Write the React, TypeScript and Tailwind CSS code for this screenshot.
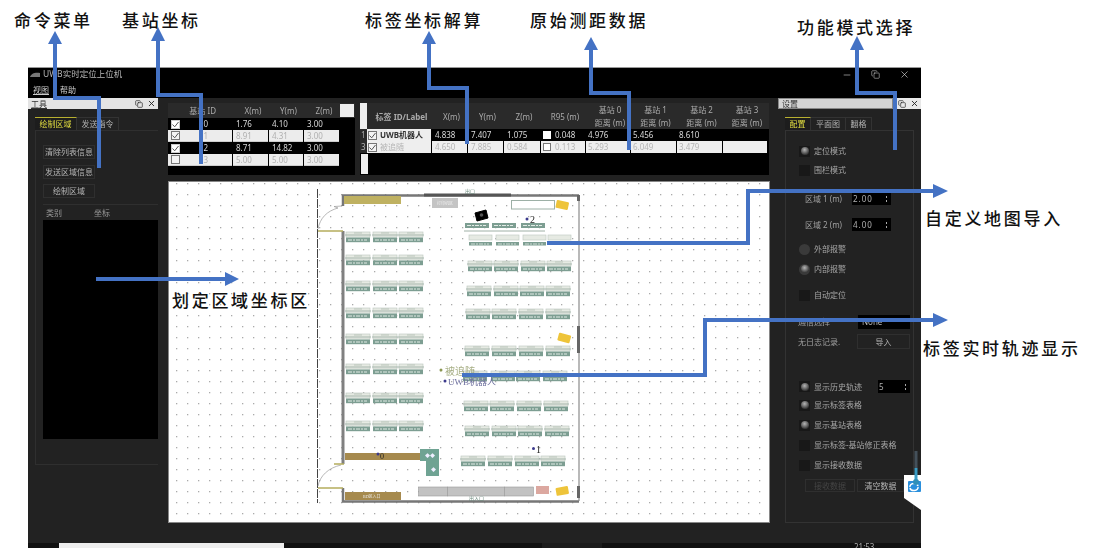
import { Copy, Minus, X } from "lucide-react";
import type { ReactNode } from "react";

const sans = "font-['Noto_Sans','Noto_Sans_CJK_SC',sans-serif]";

function Tab({ label, active, w }: { label: string; active?: boolean; w: string }) {
  return (
    <div
      className={`${w} h-[13px] flex items-center justify-center border-t border-r ${
        active ? "border-t-[#b8b030] border-r-[#333] text-[#e0dc40] bg-[#1d1d1d]" : "border-t-[#333] border-r-[#333] text-[#b0b0b0]"
      }`}
    >
      {label}
    </div>
  );
}

function PanelIcons() {
  return (
    <div className="flex items-center gap-[4px] text-[#222]">
      <Copy size={8} strokeWidth={2} />
      <X size={9} strokeWidth={2.4} />
    </div>
  );
}

function Btn({ children, className = "" }: { children: ReactNode; className?: string }) {
  return (
    <div className={`flex items-center justify-center border border-[#2f2f2f] text-[#b5b5b5] ${className}`}>{children}</div>
  );
}

function Ind({ on, round }: { on?: boolean; round?: boolean }) {
  return (
    <span
      className={`w-[11px] h-[11px] shrink-0 flex items-center justify-center ${
        round ? "rounded-full bg-[#3a3a3a]" : "bg-[#181818]"
      }`}
    >
      {on && (
        <span className="w-[8px] h-[8px] rounded-full bg-[radial-gradient(circle_at_45%_35%,#b5b5b5,#3a3a3a_70%)]" />
      )}
    </span>
  );
}

function Opt({ label, on, round, className = "" }: { label: string; on?: boolean; round?: boolean; className?: string }) {
  return (
    <div className={`h-[12px] flex items-center gap-[4px] text-[#a8a8a8] ${className}`}>
      <Ind on={on} round={round} />
      <span className="whitespace-nowrap">{label}</span>
    </div>
  );
}

function Spin({ value, w }: { value: string; w: string }) {
  return (
    <div className={`${w} h-[13px] bg-black text-[#b0b0b0] flex items-center justify-between px-[1px] tracking-[1px]`}>
      <span>{value}</span>
      <span className="flex flex-col gap-[2px] items-center mr-[3px]">
        <span className="w-[1px] h-[2px] bg-[#aaa]" />
        <span className="w-[1px] h-[2px] bg-[#aaa]" />
      </span>
    </div>
  );
}

function Cbx({ checked, dark }: { checked?: boolean; dark?: boolean }) {
  return (
    <span
      className={`w-[9px] h-[9px] shrink-0 flex items-center justify-center border ${
        dark ? "bg-white border-[#ccc]" : "bg-[#f4f4f4] border-[#777]"
      }`}
    >
      {checked && (
        <svg width="7" height="7" viewBox="0 0 7 7" className="block">
          <path d="M0.500 3.500L2.700 5.800L6.500 1" fill="none" stroke="#555" strokeWidth="1" />
        </svg>
      )}
    </span>
  );
}

const baseRows = [
  { id: "0", x: "1.76", y: "4.10", z: "3.00", on: true, dark: true },
  { id: "1", x: "8.91", y: "4.31", z: "3.00", on: true, dark: false },
  { id: "2", x: "8.71", y: "14.82", z: "3.00", on: true, dark: true },
  { id: "3", x: "5.00", y: "5.00", z: "3.00", on: false, dark: false },
];

const tagHeads = ["X(m)", "Y(m)", "Z(m)", "R95 (m)"];

const leftRows = [231, 254, 280, 307, 333, 363, 392, 420];
const leftXs = [345, 372, 398];
const rightRows: [number, number[]][] = [
  [260, [467, 493, 520, 546]],
  [285, [466, 493, 519, 545]],
  [308, [465, 491, 518, 545]],
  [345, [464, 491, 518, 545]],
  [370, [462, 490, 515, 542]],
  [400, [463, 489, 516, 543]],
  [425, [464, 491, 517, 544]],
  [455, [460, 487, 514, 540]],
];

function Desk({ x, y }: { x: number; y: number }) {
  return (
    <g>
      <rect x={x} y={y} width={24} height={5} fill="#e6eae3" stroke="#c3cdc5" strokeWidth={0.7} />
      <line x1={x - 1} x2={x + 25} y1={y + 3} y2={y + 3} stroke="#9fb0a6" strokeWidth={0.9} />
      <line x1={x + 8} x2={x + 16} y1={y + 1} y2={y + 1} stroke="#a9b8ae" strokeWidth={0.7} />
      <rect x={x} y={y + 5.5} width={24} height={4.7} fill="#7d9e92" />
      <line x1={x + 2} x2={x + 21} y1={y + 8} y2={y + 8} stroke="#e2ebe5" strokeWidth={1} strokeDasharray="4 1 2 1" />
    </g>
  );
}

function Sticker({ x, y, r }: { x: number; y: number; r: number }) {
  return (
    <rect x={x} y={y} width={12.500} height={8} rx="1" fill="#eec43a" transform={`rotate(${r} ${x + 6} ${y + 4})`} />
  );
}

function FloorPlan() {
  const serif = "'Liberation Serif','Noto Sans CJK SC',serif";
  return (
    <svg viewBox="168 181 600 340" className="w-full h-full block">
      <defs>
        <pattern id="dots" x="175" y="193" width="11" height="11" patternUnits="userSpaceOnUse">
          <rect width="1.300" height="1.300" fill="#aaaaaa" />
        </pattern>
      </defs>
      <rect x="168" y="181" width="600" height="340" fill="url(#dots)" />

      {/* outer dashed line and walls */}
      <line x1="316.5" x2="316.5" y1="188" y2="502" stroke="#444" strokeWidth="1" strokeDasharray="9 1" />
      <path d="M342 205V194.500H578" fill="none" stroke="#777" strokeWidth="2.500" />
      <path d="M342 487V500.500H578" fill="none" stroke="#777" strokeWidth="2.500" />
      <line x1="342" x2="342" y1="230" y2="463" stroke="#808080" strokeWidth="3" />
      <line x1="578" x2="578" y1="194" y2="500" stroke="#8a8a8a" strokeWidth="1.200" />
      <line x1="423" x2="510" y1="194" y2="194" stroke="#555" strokeWidth="3" />
      <line x1="577.5" x2="577.5" y1="194" y2="200" stroke="#666" strokeWidth="3" />
      <line x1="577.5" x2="577.5" y1="325" y2="352" stroke="#666" strokeWidth="3" />
      <line x1="577.5" x2="577.5" y1="485" y2="497" stroke="#666" strokeWidth="3" />
      <text x="464" y="192" fontSize="5" fill="#6b8a7d" fontFamily={serif}>出口</text>

      {/* doors */}
      <line x1="317" x2="342" y1="230" y2="230" stroke="#b5ad5c" strokeWidth="1.500" />
      <path d="M317 228C319 217 326 210 337 207L333 205.500L341 205" fill="none" stroke="#999" strokeWidth="0.7" />
      <line x1="317" x2="342" y1="487" y2="487" stroke="#b5ad5c" strokeWidth="1.500" />
      <path d="M317 485C319 475 327 467 340 464" fill="none" stroke="#999" strokeWidth="0.7" />
      <line x1="333" x2="343" y1="463" y2="463" stroke="#b5ad5c" strokeWidth="1.500" />

      {/* furniture top */}
      <rect x="343" y="195" width="57" height="8" fill="#bfb161" />
      <rect x="431" y="197" width="26" height="10" fill="#c4c4c4" />
      <text x="436" y="204" fontSize="4" fill="#eee" fontFamily={serif}>打印机区</text>
      <rect x="510.500" y="199.500" width="43" height="8.500" fill="#fff" stroke="#9db0a6" />
      <Sticker x={555} y={200} r={12} />
      <path d="M474 212L485 209L487 217L476 220Z" fill="#000" stroke="#000" strokeWidth="1" strokeLinejoin="round" />
      <circle cx="480.500" cy="214" r="1.800" fill="#555" />

      {/* desks left */}
      {leftRows.map((y) => leftXs.map((x) => <Desk key={`${x}-${y}`} x={x} y={y} />))}

      {/* desks right, first inverted row */}
      {[464, 491, 520].map((x) => (
        <g key={x}>
          <rect x={x} y="222" width="24" height="5" fill="#7d9e92" />
          <line x1={x + 2} x2={x + 21} y1="224.500" y2="224.500" stroke="#e2ebe5" strokeWidth="1" strokeDasharray="4 1 2 1" />
        </g>
      ))}
      <line x1="463" x2="544" y1="230" y2="230" stroke="#9fb0a6" strokeWidth="1" />
      {[468, 495, 522, 547].map((x) => (
        <rect key={x} x={x} y="234" width="23" height="5" fill="#e6eae3" stroke="#c3cdc5" strokeWidth="0.7" />
      ))}
      {[468, 495, 522].map((x) => (
        <g key={x}>
          <rect x={x} y="241" width="23" height="3.500" fill="#7d9e92" />
          <line x1={x + 2} x2={x + 20} y1="243" y2="243" stroke="#e2ebe5" strokeWidth="0.8" strokeDasharray="4 1 2 1" />
        </g>
      ))}
      {rightRows.map(([y, xs]) => xs.map((x) => <Desk key={`${x}-${y}`} x={x} y={y} />))}

      <Sticker x={557} y={333} r={15} />

      {/* bottom furniture */}
      <rect x="344" y="452" width="76" height="7" fill="#a68a4e" />
      <path d="M419 448H438V475H425V460H419Z" fill="#6fa393" />
      <text x="424" y="456" fontSize="5" fill="#eef" fontFamily={serif}>◆◆</text>
      <text x="430" y="470" fontSize="5" fill="#eef" fontFamily={serif}>◆</text>
      <rect x="344" y="491" width="56" height="8" fill="#a68a4e" />
      <text x="362" y="497" fontSize="4" fill="#eee" fontFamily={serif}>BD区入口</text>
      <rect x="417.500" y="486" width="29" height="9" fill="#c2c2c2" stroke="#999" strokeWidth="0.6" />
      <rect x="446.500" y="486" width="57" height="9" fill="#c2c2c2" stroke="#999" strokeWidth="0.6" />
      <rect x="503.500" y="486" width="29" height="9" fill="#c2c2c2" stroke="#999" strokeWidth="0.6" />
      <rect x="535" y="485" width="13" height="8" fill="#dca8a0" />
      <Sticker x={555} y={486} r={-10} />
      <text x="468" y="499" fontSize="5" fill="#6b8a7d" fontFamily={serif}>出入口</text>

      {/* tags */}
      <circle cx="526" cy="218" r="1.500" fill="#3c3a8c" />
      <text x="529" y="222" fontSize="10" fill="#222" fontFamily={serif}>2</text>
      <circle cx="532.500" cy="447.500" r="1.500" fill="#3c3a8c" />
      <text x="535" y="452" fontSize="10" fill="#222" fontFamily={serif}>1</text>
      <circle cx="377" cy="453" r="1.500" fill="#3c3a8c" />
      <text x="379" y="458" fontSize="8" fill="#222" fontFamily={serif}>0</text>
      <circle cx="440" cy="369" r="1.500" fill="#8a9650" />
      <text x="444" y="374" fontSize="10" fill="#a6ae84" fontFamily={serif}>被追随</text>
      <circle cx="444" cy="380" r="1.500" fill="#3c3a8c" />
      <text x="447" y="384" fontSize="9" fill="#6d6f9e" fontFamily={serif}>UWB机器人</text>
    </svg>
  );
}

function Arrow({ d, tip }: { d: string; tip: string }) {
  return (
    <g>
      <path d={d} fill="none" stroke="#4472c4" strokeWidth="4" strokeLinejoin="miter" />
      <polygon points={tip} fill="#4472c4" />
    </g>
  );
}

const notes: { text: string; cls: string }[] = [
  { text: "命令菜单", cls: "left-[14px] top-[8px]" },
  { text: "基站坐标", cls: "left-[122px] top-[8px]" },
  { text: "标签坐标解算", cls: "left-[365px] top-[8px]" },
  { text: "原始测距数据", cls: "left-[530px] top-[8px]" },
  { text: "功能模式选择", cls: "left-[797px] top-[15px]" },
  { text: "自定义地图导入", cls: "left-[925px] top-[206px]" },
  { text: "标签实时轨迹显示", cls: "left-[923px] top-[336px]" },
  { text: "划定区域坐标区", cls: "left-[172px] top-[288px]" },
];

export default function App() {
  return (
    <div className={`relative w-[1099px] h-[548px] overflow-hidden bg-white pl-[28px] pt-[67px] text-[8px] leading-none ${sans}`}>
      <div className="w-[893px] h-[481px] flex flex-col bg-[#222] border-t border-[#999] blur-[0.4px]">
        {/* title bar */}
        <div className="h-[30px] bg-black shrink-0 flex flex-col text-[#b8b8b8]">
          <div className="h-[13px] flex items-center">
            <svg width="10" height="6" viewBox="0 0 10 6" className="ml-[2px] mr-[3px]">
              <path d="M0 5C1 1 6 0 10 1V5Z" fill="#777" />
            </svg>
            <span className="text-[8.500px] flex-1">UWB实时定位上位机</span>
            <div className="flex items-center text-[#ddd] mr-[11px] gap-[19px]">
              <Minus size={10} strokeWidth={1.4} />
              <Copy size={9} strokeWidth={1.4} />
              <X size={11} strokeWidth={1.4} />
            </div>
          </div>
          <div className="h-[17px] flex items-center pl-[5px] gap-[11px] text-[#ccc]">
            <span className="underline">视图</span>
            <span>帮助</span>
          </div>
        </div>

        {/* body */}
        <div className="flex-1 flex min-h-0">
          {/* left dock */}
          <div className="w-[132px] shrink-0 flex flex-col">
            <div className="h-[11px] bg-[#e4e4e4] flex items-center justify-between pl-[3px] pr-[2px] text-[#333] mr-[2px]">
              <span className="underline">工具</span>
              <PanelIcons />
            </div>
            <div className="pl-[7px] pt-[8px] flex-1 flex flex-col">
              <div className="flex">
                <Tab label="绘制区域" active w="w-[42px]" />
                <Tab label="发送指令" w="w-[42px]" />
              </div>
              <div className="h-[335px] border border-[#2f2f2f] border-r-0 mr-[2px] pl-[7px] flex flex-col">
                <Btn className="w-[52px] h-[14px] mt-[14px]">清除列表信息</Btn>
                <Btn className="w-[52px] h-[14px] mt-[6px]">发送区域信息</Btn>
                <Btn className="w-[52px] h-[14px] mt-[5px]">绘制区域</Btn>
                <div className="h-[16px] mt-[6px] flex items-center gap-[32px] pl-[3px] text-[#999] border-t border-[#2f2f2f]">
                  <span>类别</span>
                  <span>坐标</span>
                </div>
                <div className="h-[219px] bg-black" />
              </div>
            </div>
          </div>

          {/* center */}
          <div className="flex-1 min-w-0 pl-[8px] pr-[8px] pt-[5px] flex flex-col">
            <div className="flex h-[72px] gap-[5px]">
              {/* base table */}
              <div className="w-[187px] bg-black flex flex-col">
                <div className="h-[15px] bg-[#2a2a2a] grid grid-cols-[65px_36px_35px_36px_15px] items-center text-center text-[#aaa]">
                  <span className="text-right pr-[17px]">基站 ID</span>
                  <span className="pl-[4px]">X(m)</span>
                  <span className="pl-[4px]">Y(m)</span>
                  <span className="pl-[4px]">Z(m)</span>
                  <span className="h-[13px] mr-[1px] bg-[#eee]" />
                </div>
                {baseRows.map((r) => (
                  <div key={r.id} className="h-[12px] grid grid-cols-[65px_36px_35px_36px_15px] items-stretch">
                    {[0, 1, 2, 3].map((i) => {
                      const t = [r.id, r.x, r.y, r.z][i];
                      return (
                        <div
                          key={i}
                          className={`flex items-center mr-[1px] ${
                            r.dark ? "text-[#d8d8d8]" : "bg-[#ececec] text-[#b0b0b0] border-b border-[#ccc]"
                          } ${i === 0 ? "pl-[3px] justify-between pr-[24px]" : "pl-[3px]"}`}
                        >
                          {i === 0 && <Cbx checked={r.on} dark={r.dark} />}
                          <span>{t}</span>
                        </div>
                      );
                    })}
                    <span />
                  </div>
                ))}
              </div>

              {/* tag table */}
              <div className="w-[409px] bg-black flex flex-col">
                <div className="h-[26px] bg-[#2a2a2a] grid grid-cols-[7px_65px_36px_36px_37px_45px_45px_46px_46px_45px] items-center text-center text-[#aaa] leading-[13px]">
                  <span className="h-full bg-[#eee]" />
                  <span className="font-bold pl-[4px]">标签 ID/Label</span>
                  {tagHeads.map((h) => (
                    <span key={h} className="pl-[3px]">{h}</span>
                  ))}
                  {["0", "1", "2", "3"].map((n) => (
                    <span key={n} className="pl-[3px]">
                      基站 {n}
                      <br />
                      距离 (m)
                    </span>
                  ))}
                </div>
                <div className="h-[12px] grid grid-cols-[7px_65px_36px_36px_37px_45px_45px_46px_46px_45px] text-[#d8d8d8] items-stretch">
                  <span className="text-[#aaa] bg-[#2a2a2a] pl-[1px] flex items-center">1</span>
                  <div className="bg-[#eee] text-[#333] flex items-center pl-[1px] gap-[3px] mr-[1px] font-bold">
                    <Cbx checked />
                    <span>UWB机器人</span>
                  </div>
                  <span className="flex items-center pl-[3px]">4.838</span>
                  <span className="flex items-center pl-[3px]">7.407</span>
                  <span className="flex items-center pl-[3px]">1.075</span>
                  <span className="flex items-center pl-[2px] gap-[4px]">
                    <span className="w-[8px] h-[8px] bg-white" />
                    0.048
                  </span>
                  <span className="flex items-center pl-[2px]">4.976</span>
                  <span className="flex items-center pl-[2px]">5.456</span>
                  <span className="flex items-center pl-[2px]">8.610</span>
                  <span />
                </div>
                <div className="h-[12px] grid grid-cols-[7px_65px_36px_36px_37px_45px_45px_46px_46px_45px] text-[#b5b5b5] items-stretch">
                  <span className="bg-[#2a2a2a] pl-[1px] flex items-center">3</span>
                  <div className="bg-[#eee] flex items-center pl-[1px] gap-[3px] mr-[1px]">
                    <Cbx checked />
                    <span>被追随</span>
                  </div>
                  {["4.650", "7.885", "0.584"].map((v) => (
                    <span key={v} className="bg-[#eee] flex items-center pl-[3px] mr-[1px]">
                      {v}
                    </span>
                  ))}
                  <span className="bg-[#eee] flex items-center pl-[2px] gap-[4px] mr-[1px]">
                    <span className="w-[8px] h-[8px] bg-white border border-[#777]" />
                    0.113
                  </span>
                  {["5.293", "6.049", "3.479", ""].map((v, i) => (
                    <span key={i} className="bg-[#eee] flex items-center pl-[2px] mr-[1px]">
                      {v}
                    </span>
                  ))}
                </div>
                <div className="h-[20px] mt-[1px] w-[7px] ml-[1px] bg-[#eee]" />
              </div>
            </div>

            <div className="mt-[6px] h-[342px] w-[602px] bg-white border border-[#888]">
              <FloorPlan />
            </div>
          </div>

          {/* right dock */}
          <div className="w-[143px] shrink-0 flex flex-col">
            <div className="h-[11px] flex">
              <div className="w-[115px] bg-[#d4d4d4] border border-[#888] flex items-center pl-[3px] text-[#333]">设置</div>
              <div className="flex-1 bg-[#e8e8e8] flex items-center justify-end pr-[2px]">
                <PanelIcons />
              </div>
            </div>
            <div className="pl-[7px] pr-[7px] pt-[8px] flex-1 flex flex-col">
              <div className="flex">
                <Tab label="配置" active w="w-[26px]" />
                <Tab label="平面图" w="w-[35px]" />
                <Tab label="翻格" w="w-[26px]" />
              </div>
              <div className="h-[393px] border border-[#333] pl-[13px] pt-[14px] flex flex-col">
                <Opt label="定位模式" on />
                <Opt label="围栏模式" className="mt-[7px]" />
                <div className="mt-[16px] flex items-center gap-[11px] pl-[6px] text-[#a0a0a0]">
                  <span className="w-[36px] whitespace-nowrap">区域 1 (m)</span>
                  <Spin value="2.00" w="w-[39px]" />
                </div>
                <div className="mt-[13px] flex items-center gap-[11px] pl-[6px] text-[#a0a0a0]">
                  <span className="w-[36px] whitespace-nowrap">区域 2 (m)</span>
                  <Spin value="4.00" w="w-[39px]" />
                </div>
                <Opt label="外部报警" round className="mt-[12px]" />
                <Opt label="内部报警" round on className="mt-[8px]" />
                <Opt label="自动定位" className="mt-[14px]" />
                <div className="mt-[14px] h-[14px] flex items-center text-[#a0a0a0] -ml-[1px]">
                  <span className="w-[60px]">通信选择</span>
                  <div className="w-[52px] h-[14px] bg-black text-[#bbb] flex items-center pl-[4px]">None</div>
                </div>
                <div className="mt-[5px] h-[15px] flex items-center text-[#a0a0a0] -ml-[1px]">
                  <span className="w-[59px]">无日志记录.</span>
                  <Btn className="w-[53px] h-[15px]">导入</Btn>
                </div>
                <div className="mt-[31px] h-[13px] flex items-center justify-between pr-[3px]">
                  <Opt label="显示历史轨迹" on />
                  <Spin value="5" w="w-[32px]" />
                </div>
                <Opt label="显示标签表格" on className="mt-[6px]" />
                <Opt label="显示基站表格" on className="mt-[8px]" />
                <Opt label="显示标签-基站修正表格" className="mt-[8px]" />
                <Opt label="显示接收数据" className="mt-[8px]" />
                <div className="mt-[8px] flex gap-[2px] pl-[6px]">
                  <Btn className="w-[50px] h-[13px] text-[#444]!">接收数据</Btn>
                  <Btn className="w-[47px] h-[13px]">清空数据</Btn>
                </div>
              </div>
            </div>
          </div>
        </div>

        {/* bottom bar */}
        <div className="h-[5px] shrink-0 bg-[#111] flex overflow-hidden">
          <div className="w-[31px]" />
          <div className="w-[225px] bg-[#eee]" />
          <div className="w-[258px]" />
          <div className="w-[60px] bg-[#1c1c1c]" />
          <div className="ml-[252px] text-[8px] leading-[8px] text-[#aaa]">21:53</div>
        </div>
      </div>

      {/* annotation arrows */}
      <svg viewBox="0 0 1099 548" className="absolute inset-0 w-[1099px] h-[548px] pointer-events-none">
        <polygon points="904,475 921,475 921,510 904,498" fill="#fff" />
        <rect x="908" y="481" width="13" height="11" rx="1" fill="#2a8fdc" />
        <path d="M910 487a4 3 0 0 1 8 -1M918 487a4 3 0 0 1 -8 1" fill="none" stroke="#fff" strokeWidth="1.500" />
        <line x1="916" x2="916" y1="451" y2="468" stroke="#44505a" strokeWidth="3" />
        <line x1="916" x2="916" y1="468" y2="483" stroke="#3a9cc4" strokeWidth="3" />
        <circle cx="916" cy="482" r="3" fill="#2f8fb8" />

        <Arrow d="M55 43V98H99V168" tip="55,31 48,44 62,44" />
        <Arrow d="M158 40V95H201V164" tip="158,27 151,41 165,41" />
        <Arrow d="M429 43V88H467V144" tip="429,31 422,44 436,44" />
        <Arrow d="M591 49V93H629V150" tip="591,37 584,50 598,50" />
        <Arrow d="M857 49V93H895V150" tip="857,36 850,50 864,50" />
        <Arrow d="M547 243H748V191H934" tip="948,191 933,184 933,198" />
        <Arrow d="M462 375H705V320H934" tip="948,320 933,313 933,327" />
        <Arrow d="M96 279H226" tip="239,279 225,272 225,286" />
      </svg>

      {/* annotation labels */}
      {notes.map((n) => (
        <span
          key={n.text}
          className={`absolute ${n.cls} text-[17px] leading-[24px] tracking-[2.700px] font-medium text-[#111] whitespace-nowrap font-['Noto_Sans_CJK_SC',sans-serif]`}
        >
          {n.text}
        </span>
      ))}
    </div>
  );
}
